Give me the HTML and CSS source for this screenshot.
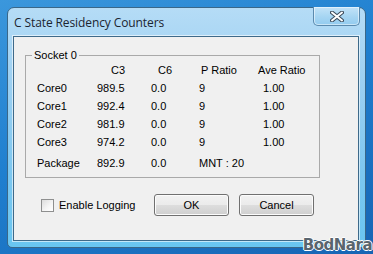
FILE: index.html
```html
<!DOCTYPE html>
<html lang="en">
<head>
<meta charset="UTF-8">
<title>C State Residency Counters</title>
<link rel="stylesheet" href="styles.css">
</head>
<body>
<div class="desktop">
    <div class="window">
        <div class="titlebar">
            <span class="title">C State Residency Counters</span>
            <button class="close" type="button">
                <svg width="14" height="11" viewBox="0 0 14 11">
                    <path d="M2 1.5 L12 9.5 M12 1.5 L2 9.5" stroke="#3b4a5a" stroke-width="4" stroke-linecap="round"/>
                    <path d="M2 1.5 L12 9.5 M12 1.5 L2 9.5" stroke="#ffffff" stroke-width="2" stroke-linecap="round"/>
                </svg>
            </button>
        </div>
        <div class="client">
            <fieldset class="group">
                <legend>Socket 0</legend>
                <div class="grid">
                    <span></span>
                    <span class="h-c3">C3</span>
                    <span class="h-c6">C6</span>
                    <span class="h-pr">P Ratio</span>
                    <span>Ave Ratio</span>

                    <span>Core0</span><span>989.5</span><span>0.0</span><span>9</span><span class="ave">1.00</span>
                    <span>Core1</span><span>992.4</span><span>0.0</span><span>9</span><span class="ave">1.00</span>
                    <span>Core2</span><span>981.9</span><span>0.0</span><span>9</span><span class="ave">1.00</span>
                    <span>Core3</span><span>974.2</span><span>0.0</span><span>9</span><span class="ave">1.00</span>

                    <span class="pkg">Package</span><span class="pkg">892.9</span><span class="pkg">0.0</span><span class="pkg mnt">MNT : 20</span>
                </div>
            </fieldset>
            <div class="actions">
                <label class="check"><span class="box"></span>Enable Logging</label>
                <button class="btn ok" type="button">OK</button>
                <button class="btn" type="button">Cancel</button>
            </div>
        </div>
    </div>
    <div class="mark">BodNara</div>
</div>
</body>
</html>
```

FILE: styles.css
```css
body {
    margin: 0;
    font-family: "Liberation Sans", Arial, sans-serif;
    font-size: 11px;
    color: #000;
}
.desktop {
    position: relative;
    width: 373px;
    height: 254px;
    box-sizing: border-box;
    padding: 7px 7px 6px 7px;
    background: linear-gradient(160deg, #3b97dc 0%, #1f7fcf 45%, #1765b4 100%);
    overflow: hidden;
}
.window {
    height: 241px;
    box-sizing: border-box;
    border: 1px solid #3a6788;
    border-radius: 7px 7px 5px 5px;
    background: linear-gradient(180deg, #b5dcf6 0%, #9dd0f2 30%, #7cc7f0 70%, #69c6f1 100%);
    padding: 0 6px 6px 5px;
    display: flex;
    flex-direction: column;
}
.titlebar {
    height: 28px;
    display: flex;
    align-items: flex-start;
    justify-content: space-between;
}
.title {
    font-family: "Open Sans", "Liberation Sans", sans-serif;
    font-size: 12px;
    color: #1b2430;
    padding: 6px 0 0 1px;
    letter-spacing: -0.1px;
}
.close {
    width: 47px;
    height: 19px;
    margin: -1px -1px 0 0;
    border: 1px solid #5b8aae;
    border-top: none;
    border-radius: 0 0 5px 5px;
    background: linear-gradient(180deg, #c3e3f8 0%, #a8d6f3 50%, #92cbef 100%);
    box-shadow: inset 0 0 0 1px rgba(255, 255, 255, 0.5);
    padding: 0;
    display: flex;
    align-items: center;
    justify-content: center;
}
.client {
    flex: 1;
    border: 1px solid #3e6a8a;
    box-shadow: 0 0 0 1px rgba(255, 255, 255, 0.6);
    background: #f0f0f0;
    padding: 12px 0 0 11px;
}
.group {
    width: 295px;
    box-sizing: border-box;
    margin: 0;
    border: 1px solid #a9a9a9;
    padding: 0 0 8px 11px;
}
.group legend {
    padding: 0 2px;
    margin-left: -5px;
    line-height: 12px;
}
.grid {
    display: grid;
    grid-template-columns: 60px 54px 48px 59px auto;
    grid-auto-rows: 18px;
    align-items: center;
}
.h-c3 { padding-left: 14px; }
.h-c6 { padding-left: 7px; }
.h-pr { padding-left: 2px; }
.ave { padding-left: 5px; }
.pkg {
    margin-top: 6px;
}
.mnt {
    grid-column: span 2;
}
.actions {
    display: flex;
    align-items: center;
    margin-top: 16px;
    height: 22px;
}
.check {
    display: flex;
    align-items: center;
    margin-left: 16px;
    width: 113px;
}
.box {
    width: 11px;
    height: 11px;
    border: 1px solid #8e8f8f;
    background: linear-gradient(135deg, #dcdcdc 0%, #f6f6f6 60%, #fff 100%);
    margin-right: 5px;
}
.btn {
    width: 75px;
    height: 22px;
    font-family: "Liberation Sans", Arial, sans-serif;
    font-size: 11px;
    color: #000;
    border: 1px solid #707070;
    border-radius: 3px;
    background: linear-gradient(180deg, #f2f2f2 0%, #ebebeb 50%, #dddddd 51%, #cfcfcf 100%);
    box-shadow: inset 0 0 0 1px #fcfcfc;
    padding: 0;
}
.ok {
    margin-right: 10px;
}
.mark {
    position: absolute;
    right: 1px;
    bottom: 0;
    line-height: 17px;
    font-family: "DejaVu Sans", sans-serif;
    font-weight: bold;
    font-size: 15px;
    color: #59656e;
    letter-spacing: -0.5px;
    text-shadow: 1px 0 #fff, -1px 0 #fff, 0 1px #fff, 0 -1px #fff;
}
```
